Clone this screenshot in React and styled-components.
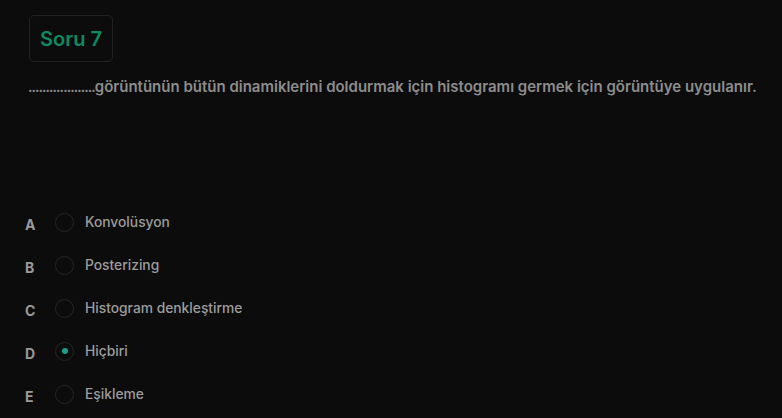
import React from 'react';
import styled, { createGlobalStyle } from 'styled-components';

const Global = createGlobalStyle`
  html, body {
    margin:0;
    background:#0c0c0c;
    font-family:"Inter","Noto Sans",sans-serif;
  }
`;

const Page = styled.div`
  padding:15px 20px 0 28px;
  min-height:403px;
  background:#0c0c0c;
`;

const Badge = styled.div`
  display:inline-flex;
  align-items:center;
  height:45px;
  padding:0 10px;
  border:1.5px solid #222;
  border-radius:5px;
  margin-left:1px;
  color:#0c8a62;
  font-size:20px;
  font-weight:600;
`;

const Question = styled.p`
  margin:15px 0 0;
  color:#8c8c8c;
  font-size:15px;
  font-weight:600;
  white-space:nowrap;
`;

const Dots = styled.span`
  font-size:14px;
  letter-spacing:-0.95px;
`;

const Options = styled.div`
  margin-top:116px;
  display:flex;
  flex-direction:column;
  gap:23px;
`;

const Row = styled.div`
  display:flex;
  align-items:center;
  height:20px;
`;

const Letter = styled.span`
  width:30px;
  margin-left:-3px;
  padding-top:5px;
  color:#9a9a9a;
  font-size:14px;
  font-weight:700;
`;

const Radio = styled.span`
  width:17px;
  height:17px;
  border-radius:50%;
  border:1px solid #262626;
  display:flex;
  align-items:center;
  justify-content:center;
  margin-right:11px;
  &:after{
    content:'';
    width:6px;
    height:6px;
    border-radius:50%;
    background:${(p)=>p.checked ? '#1a9e8f' : 'transparent'};
  }
`;

const Label = styled.span`
  color:#9c9c9c;
  font-size:13.8px;
  font-weight:500;
`;

const options = [
  ['A', 'Konvolüsyon'],
  ['B', 'Posterizing'],
  ['C', 'Histogram denkleştirme'],
  ['D', 'Hiçbiri', true],
  ['E', 'Eşikleme'],
];

export default function App() {
  return (
    <Page>
      <Global />
      <Badge>Soru 7</Badge>
      <Question>
        <Dots>...................</Dots>görüntünün bütün dinamiklerini doldurmak için histogramı germek için görüntüye uygulanır.
      </Question>
      <Options>
        {options.map(([l, t, c]) => (
          <Row key={l}>
            <Letter>{l}</Letter>
            <Radio checked={c} />
            <Label>{t}</Label>
          </Row>
        ))}
      </Options>
    </Page>
  );
}
